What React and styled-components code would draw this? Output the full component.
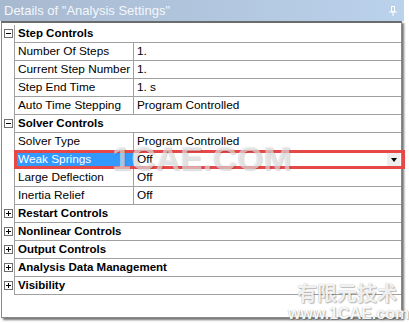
import React from "react";
import styled, { createGlobalStyle } from "styled-components";

const PageStyle = createGlobalStyle`
  body {
    margin: 0;
    background: #fff;
    font-family: "Liberation Sans", Arial, sans-serif;
  }
`;

const Window = styled.div`
  position: relative;
  width: 409px;
  height: 323px;
  overflow: hidden;
`;

const TitleBar = styled.div`
  width: 404px;
  height: 21px;
  box-sizing: border-box;
  padding: 0 7px 0 4px;
  display: flex;
  align-items: center;
  justify-content: space-between;
  background: linear-gradient(to right, #a7b9cf, #bbd2ec);
  color: #f3f7fb;
  font-size: 13px;
  line-height: 21px;
`;

const Body = styled.div`
  margin-left: 1px;
  width: 401px;
  height: 297px;
  box-sizing: border-box;
  padding-top: 2px;
  border: 1px solid #8a8a8a;
  border-top: 2px solid #6b6b6b;
  background: #fff;
  box-shadow: 2px 2px 2px rgba(0, 0, 0, 0.55);
`;

const Row = styled.div`
  display: flex;
  height: 18px;
`;

const Expander = styled.div`
  flex: none;
  width: 13px;
  padding: 4px 0 0 2px;
  box-sizing: border-box;
  border-right: 1px solid #a0a0a0;
`;

const ToggleBox = styled.div`
  position: relative;
  width: 9px;
  height: 9px;
  box-sizing: border-box;
  border: 1px solid #6e6e6e;
  background: #fff;
  &::before {
    content: "";
    position: absolute;
    left: 1px;
    top: 3px;
    width: 5px;
    height: 1px;
    background: #000;
  }
  &::after {
    content: "";
    display: ${({ open }) => (open ? "none" : "block")};
    position: absolute;
    left: 3px;
    top: 1px;
    width: 1px;
    height: 5px;
    background: #000;
  }
`;

const Main = styled.div`
  flex: 1;
  display: flex;
  height: 18px;
  box-sizing: border-box;
  border-bottom: 1px solid #a0a0a0;
  font-size: 11.8px;
  line-height: 17px;
  color: #000;
`;

const Category = styled.div`
  padding-left: 3px;
  font-weight: bold;
  font-size: 11.5px;
`;

const Name = styled.div`
  flex: none;
  width: 119px;
  padding-left: 3px;
  box-sizing: border-box;
  border-right: 1px solid #a0a0a0;
  white-space: nowrap;
  background: ${({ selected }) => (selected ? "#3399ff" : "transparent")};
  color: ${({ selected }) => (selected ? "#fff" : "#000")};
`;

const Value = styled.div`
  flex: 1;
  display: flex;
  justify-content: space-between;
  padding-left: 3px;
  white-space: nowrap;
`;

const DropButton = styled.div`
  width: 13px;
  height: 15px;
  margin: 1px 1px 0 0;
  background: #eeeeee;
  display: flex;
  align-items: center;
  justify-content: center;
  &::after {
    content: "";
    border-left: 3.5px solid transparent;
    border-right: 3.5px solid transparent;
    border-top: 4px solid #000;
  }
`;

const Highlight = styled.div`
  position: absolute;
  left: 14px;
  top: 150px;
  width: 391px;
  height: 19px;
  box-sizing: border-box;
  border: 3px solid #e64848;
`;

const Watermark = styled.div`
  position: absolute;
  left: ${({ x }) => x}px;
  top: ${({ y }) => y}px;
  font-family: ${({ cjk }) =>
    cjk ? '"Noto Sans CJK SC", sans-serif' : '"Liberation Sans", Arial, sans-serif'};
  font-weight: bold;
  font-size: ${({ size }) => size}px;
  line-height: 1;
  white-space: nowrap;
  color: rgba(255, 255, 255, ${({ alpha }) => alpha});
  text-shadow: 0 0 1px rgba(0, 0, 0, ${({ edge }) => edge}),
    1px 1px 1px rgba(0, 0, 0, ${({ edge }) => edge * 0.7});
  pointer-events: none;
`;

const PinIcon = () => (
  <svg width="8" height="10" viewBox="0 0 8 10">
    <rect x="2.5" y="0.5" width="3" height="5" fill="none" stroke="#fff" />
    <line x1="0" y1="6" x2="8" y2="6" stroke="#fff" />
    <line x1="4" y1="6" x2="4" y2="10" stroke="#fff" />
  </svg>
);

const sections = [
  {
    title: "Step Controls",
    open: true,
    items: [
      ["Number Of Steps", "1."],
      ["Current Step Number", "1."],
      ["Step End Time", "1. s"],
      ["Auto Time Stepping", "Program Controlled"],
    ],
  },
  {
    title: "Solver Controls",
    open: true,
    items: [
      ["Solver Type", "Program Controlled"],
      ["Weak Springs", "Off", true],
      ["Large Deflection", "Off"],
      ["Inertia Relief", "Off"],
    ],
  },
  { title: "Restart Controls" },
  { title: "Nonlinear Controls" },
  { title: "Output Controls" },
  { title: "Analysis Data Management" },
  { title: "Visibility" },
];

const App = () => {
  return (
    <Window>
      <PageStyle />
      <TitleBar>
        <span>Details of "Analysis Settings"</span>
        <PinIcon />
      </TitleBar>
      <Body>
        {sections.map((section) => (
          <React.Fragment key={section.title}>
            <Row>
              <Expander>
                <ToggleBox open={section.open} />
              </Expander>
              <Main>
                <Category>{section.title}</Category>
              </Main>
            </Row>
            {section.open &&
              section.items.map(([name, value, selected]) => (
                <Row key={name}>
                  <Expander />
                  <Main>
                    <Name selected={selected}>{name}</Name>
                    <Value>
                      <span>{value}</span>
                      {selected && <DropButton />}
                    </Value>
                  </Main>
                </Row>
              ))}
          </React.Fragment>
        ))}
      </Body>
      <Highlight />
      <Watermark x={112} y={141} size={34} alpha={0.6} edge={0.18}>
        1CAE.COM
      </Watermark>
      <Watermark x={297} y={283} size={20} alpha={0.9} edge={0.35} cjk>
        有限元技术
      </Watermark>
      <Watermark x={288} y={306} size={16} alpha={0.95} edge={0.35}>
        www.1CAE.com
      </Watermark>
    </Window>
  );
};

export default App;
